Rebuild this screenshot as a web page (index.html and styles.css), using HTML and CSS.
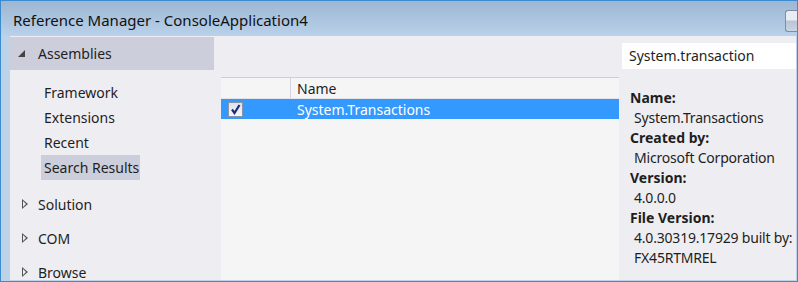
FILE: index.html
```html
<!DOCTYPE html>
<html lang="en">
<head>
    <meta charset="UTF-8">
    <title>Reference Manager - ConsoleApplication4</title>
    <link rel="stylesheet" href="styles.css">
</head>
<body>
    <div class="window">
        <div class="titlebar">
            <span class="title">Reference Manager - ConsoleApplication4</span>
            <span class="caption-btn"></span>
        </div>
        <div class="frame">
            <div class="nav">
                <div class="group open">
                    <span class="arrow-open"></span>Assemblies
                </div>
                <div class="items">
                    <div class="item">Framework</div>
                    <div class="item">Extensions</div>
                    <div class="item">Recent</div>
                    <div class="item active">Search Results</div>
                </div>
                <div class="group"><span class="arrow-closed"></span>Solution</div>
                <div class="group"><span class="arrow-closed"></span>COM</div>
                <div class="group"><span class="arrow-closed"></span>Browse</div>
            </div>

            <div class="list">
                <div class="list-head">
                    <div class="col-check"></div>
                    <div class="col-name">Name</div>
                </div>
                <div class="list-row selected">
                    <div class="col-check">
                        <span class="checkbox">
                            <svg width="11" height="11" viewBox="0 0 11 11">
                                <path d="M2 5.5 L4.5 9 L9.5 1" fill="none" stroke="#1c2a7a" stroke-width="2.2"/>
                            </svg>
                        </span>
                    </div>
                    <div class="col-name">System.Transactions</div>
                </div>
            </div>

            <div class="details">
                <div class="search">System.transaction</div>
                <dl class="info">
                    <dt>Name:</dt>
                    <dd>System.Transactions</dd>
                    <dt>Created by:</dt>
                    <dd>Microsoft Corporation</dd>
                    <dt>Version:</dt>
                    <dd>4.0.0.0</dd>
                    <dt>File Version:</dt>
                    <dd>4.0.30319.17929 built by:<br>FX45RTMREL</dd>
                </dl>
            </div>
        </div>
    </div>
</body>
</html>
```

FILE: styles.css
```css
* {
    box-sizing: border-box;
}

body {
    margin: 0;
    font-family: 'Noto Sans', 'Open Sans', sans-serif;
    font-size: 14px;
    color: #1e1e1e;
    background: #fff;
}

.window {
    width: 798px;
    height: 282px;
    border: 1px solid #3a8ccf;
    display: flex;
    flex-direction: column;
    overflow: hidden;
}

.titlebar {
    height: 35px;
    flex: none;
    display: flex;
    align-items: center;
    justify-content: space-between;
    background: linear-gradient(#9db6d3, #b9d1ea);
}

.title {
    padding-left: 12px;
    padding-top: 2px;
    font-size: 15px;
    color: #111;
}

.caption-btn {
    width: 12px;
    height: 22px;
    margin-top: 4px;
    border: 1px solid #7d8da4;
    border-right: none;
    border-radius: 3px 0 0 3px;
    background: linear-gradient(#e8edf3 45%, #b9c5d6 50%, #c9d5e4);
}

.frame {
    flex: 1;
    display: flex;
    background: #eeeef2;
    border-left: 9px solid #bcd3ea;
    border-right: 1px solid #bcd3ea;
    border-bottom: 1px solid #bcd3ea;
    min-height: 0;
}

/* left navigation */
.nav {
    width: 204px;
    flex: none;
    padding-top: 1px;
}

.group {
    height: 34px;
    display: flex;
    align-items: center;
    padding-left: 28px;
    position: relative;
}

.group.open {
    height: 33px;
    background: #cccedb;
}

.arrow-open {
    position: absolute;
    left: 8px;
    top: 13px;
    width: 0;
    height: 0;
    border-left: 7px solid transparent;
    border-bottom: 7px solid #444;
}

.arrow-closed {
    position: absolute;
    left: 12px;
    top: 12px;
    width: 0;
    height: 0;
    border-top: 5px solid transparent;
    border-bottom: 5px solid transparent;
    border-left: 6px solid #555;
}

.arrow-closed::after {
    content: "";
    position: absolute;
    left: -5px;
    top: -3px;
    border-top: 3px solid transparent;
    border-bottom: 3px solid transparent;
    border-left: 3px solid #eeeef2;
}

.items {
    padding: 10px 0 7px 31px;
}

.item {
    height: 25px;
    line-height: 25px;
    padding-left: 3px;
    padding-right: 1px;
    display: table;
}

.item.active {
    background: #cccedb;
}

/* reference list */
.list {
    width: 398px;
    flex: none;
    margin: 41px 0 0 7px;
    background: #f5f5f6;
    border-top: 1px solid #ccceda;
}

.list-head,
.list-row {
    display: flex;
    height: 21px;
    align-items: center;
}

.list-head {
    border-bottom: 1px solid #e2e2ea;
}

.list-head .col-check {
    align-self: stretch;
    border-right: 1px solid #d4d4dc;
}

.col-check {
    width: 70px;
    padding-left: 7px;
    display: flex;
    align-items: center;
}

.col-name {
    padding-left: 6px;
}

.list-row.selected {
    height: 20px;
    background: #3399ff;
    color: #fff;
}

.checkbox {
    width: 15px;
    height: 15px;
    border: 1px solid #8a93a8;
    background: linear-gradient(#dfe3ea, #f4f5f8);
    display: flex;
    align-items: center;
    justify-content: center;
}

/* details panel */
.details {
    flex: 1;
    min-width: 0;
    padding: 7px 0 0 3px;
}

.search {
    height: 26px;
    line-height: 26px;
    background: #fff;
    padding-left: 7px;
}

.info {
    margin: 19px 0 0 8px;
    line-height: 20px;
    white-space: nowrap;
}

.info dt {
    font-weight: bold;
}

.info dd {
    margin: 0 0 0 4px;
    letter-spacing: -0.2px;
}
```
